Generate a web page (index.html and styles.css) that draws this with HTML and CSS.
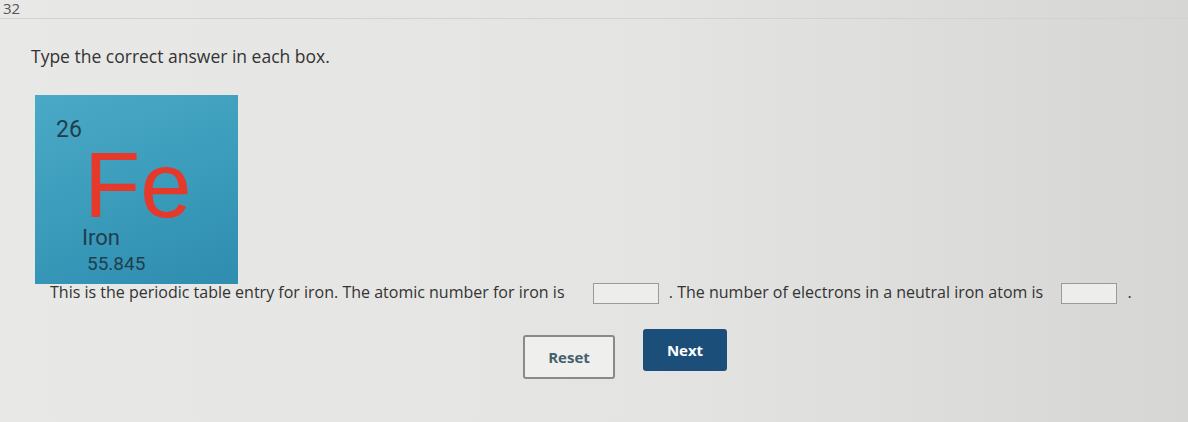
FILE: index.html
```html
<!DOCTYPE html>
<html lang="en">
  <head>
    <meta charset="UTF-8" />
    <title>Question 32</title>
    <link rel="stylesheet" href="styles.css">
  </head>
  <body>
    <div class="nummer">32</div>

    <main class="opgave">
      <p class="instruks">Type the correct answer in each box.</p>

      <!-- grundstof-kort -->
      <div class="element">
        <span class="atomnr">26</span>
        <span class="symbol">Fe</span>
        <span class="navn">Iron</span>
        <span class="masse">55.845</span>
      </div>

      <p class="tekst">
        This is the periodic table entry for iron. The atomic number for iron is
        <input type="text" class="svar svar1" />
        . The number of electrons in a neutral iron atom is
        <input type="text" class="svar svar2" />
        .
      </p>

      <div class="knapper">
        <button class="reset">Reset</button>
        <button class="next">Next</button>
      </div>
    </main>
  </body>
</html>
```

FILE: styles.css
```css
* {
  margin: 0;
  padding: 0;
  box-sizing: border-box;
}

body {
  width: 1188px;
  height: 422px;
  overflow: hidden;
  font-family: "Open Sans", sans-serif;
  color: #3a3a3a;
  background: linear-gradient(90deg, #e8e8e6 0%, #e4e4e2 55%, #d6d6d4 100%);
}

.nummer {
  height: 19px;
  padding-left: 3px;
  font-size: 15px;
  line-height: 16px;
  color: #555;
  border-bottom: 1px solid #d2d2d0;
}

.opgave {
  padding-left: 31px;
}

.instruks {
  margin-top: 24px;
  font-size: 17.5px;
  line-height: 26px;
  color: #333;
}

/* ---------ELEMENT KORT------------*/

.element {
  width: 203px;
  height: 189px;
  margin-top: 26px;
  margin-left: 4px;
  padding: 22px 0 0 21px;
  display: flex;
  flex-direction: column;
  background: linear-gradient(160deg, #4aa9c6 0%, #3b9cbb 50%, #2f8db0 100%);
  color: #1f3f4e;
  font-family: Roboto, sans-serif;
}

.atomnr {
  font-size: 23px;
  line-height: 26px;
}

.symbol {
  margin-left: 28px;
  margin-top: 8px;
  font-family: "Liberation Sans", Arial, sans-serif;
  font-size: 92px;
  line-height: 68px;
  color: #e4392b;
}

.navn {
  margin-left: 26px;
  margin-top: 6px;
  font-size: 22px;
  line-height: 26px;
}

.masse {
  margin-left: 31px;
  margin-top: 2px;
  font-size: 19px;
  line-height: 22px;
}

/* ---------SPOERGSMAAL------------*/

.tekst {
  margin-top: -5px;
  padding-left: 19px;
  font-size: 16px;
  line-height: 26px;
  color: #333;
}

.svar {
  width: 66px;
  height: 21px;
  margin: 0 6px 0 24px;
  vertical-align: middle;
  border: 1px solid #9a9a9a;
  background: #ededeb;
}

.svar2 {
  width: 56px;
  margin-left: 14px;
}

.knapper {
  display: flex;
  align-items: flex-start;
  gap: 28px;
  margin-top: 24px;
  padding-left: 492px;
}

button {
  font-family: "Open Sans", sans-serif;
  font-weight: 700;
  font-size: 15px;
  border-radius: 3px;
}

.reset {
  width: 92px;
  height: 44px;
  margin-top: 6px;
  border: 2px solid #8a8a8a;
  background: #efefed;
  color: #44606e;
}

.next {
  width: 84px;
  height: 42px;
  border: none;
  background: #1b4e78;
  color: #fff;
}
```
